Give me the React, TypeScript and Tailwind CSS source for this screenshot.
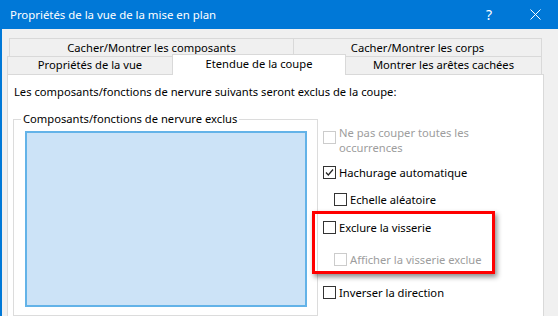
import { ReactNode } from 'react';

function Check({ checked, disabled }: { checked?: boolean; disabled?: boolean }) {
  return (
    <div
      className={`w-[13px] h-[13px] shrink-0 border bg-white flex items-center justify-center ${
        disabled ? 'border-[#cccccc]' : 'border-[#333333]'
      }`}
    >
      {checked && (
        <svg width="11" height="11" viewBox="0 0 11 11">
          <path d="M2 5.5 L4.3 8 L9 2.5" fill="none" stroke="#222" strokeWidth="1.2" />
        </svg>
      )}
    </div>
  );
}

function Row({
  children,
  checked,
  disabled,
  className = '',
}: {
  children: ReactNode;
  checked?: boolean;
  disabled?: boolean;
  className?: string;
}) {
  return (
    <div className={`flex items-center h-[15px] gap-[3px] ${className}`}>
      <Check checked={checked} disabled={disabled} />
      <span className={`leading-[15px] whitespace-nowrap ${disabled ? 'text-[#9d9d9d]' : 'text-black'}`}>
        {children}
      </span>
    </div>
  );
}

export default function App() {
  return (
    <div className="w-[558px] h-[316px] overflow-hidden bg-[#f0f0f0] font-['Noto_Sans',sans-serif] text-[11.2px] text-black">
      {/* Title bar */}
      <div className="h-[29px] bg-[#0078d7] flex items-center text-white">
        <span className="pl-[10px] flex-1 text-[11.4px]">Propriétés de la vue de la mise en plan</span>
        <div className="w-[46px] h-full flex items-center justify-center text-[14px]">?</div>
        <div className="w-[46px] h-full flex items-center justify-center">
          <svg width="11" height="11" viewBox="0 0 11 11">
            <path d="M0.5 0.5 L10.5 10.5 M10.5 0.5 L0.5 10.5" stroke="white" strokeWidth="1" />
          </svg>
        </div>
      </div>

      {/* Body */}
      <div className="h-[287px] border-l-2 border-[#0078d7] pl-[5px] pt-[9px]">
        {/* Tab row 1 */}
        <div className="flex ml-[2px] h-[18px]">
          <div className="w-[284px] border-t border-l border-[#d9d9d9] flex items-center justify-center leading-[17px]">
            Cacher/Montrer les composants
          </div>
          <div className="w-[249px] border-t border-l border-r border-[#d9d9d9] flex items-center justify-center leading-[17px]">
            Cacher/Montrer les corps
          </div>
        </div>

        {/* Tab row 2 */}
        <div className="flex items-end h-[18px]">
          <div className="w-[165px] h-[18px] border-t border-l border-[#d9d9d9] flex items-center justify-center">
            Propriétés de la vue
          </div>
          <div className="relative z-10 w-[174px] h-[21px] -mb-[1px] bg-white border-t border-l border-r border-[#d9d9d9] flex items-center justify-center pb-[2px]">
            Etendue de la coupe
          </div>
          <div className="w-[196px] h-[18px] border-t border-r border-[#d9d9d9] flex items-center justify-center">
            Montrer les arêtes cachées
          </div>
        </div>

        {/* Panel */}
        <div className="w-[537px] h-[260px] bg-white border border-[#d9d9d9] pl-[5px] pt-[9px]">
          <p className="ml-[1px] leading-[16px]">
            Les composants/fonctions de nervure suivants seront exclus de la coupe:
          </p>

          <div className="flex mt-[11px]">
            <fieldset className="w-[305px] h-[205px] border border-[#dcdcdc] px-0">
              <legend className="ml-[7px] px-[2px] leading-[16px]">Composants/fonctions de nervure exclus</legend>
              <div className="ml-[11px] mt-[4px] w-[282px] h-[176px] bg-[#cce3f7] border-2 border-[#63b3e8]" />
            </fieldset>

            <div className="ml-[5px] pt-[14px] flex flex-col">
              <div className="flex items-start gap-[3px]">
                <div className="mt-[6px]">
                  <Check disabled />
                </div>
                <span className="leading-[15px] text-[#9d9d9d]">
                  Ne pas couper toutes les
                  <br />
                  occurrences
                </span>
              </div>

              <Row checked className="mt-[10px]">
                Hachurage automatique
              </Row>
              <Row className="mt-[12px] ml-[11px]">Echelle aléatoire</Row>

              <div className="mt-[4px] -ml-[11px] w-[183px] border-[3px] border-[#ff0000] pl-[8px] pt-[6px] pb-[4px] shadow-[2px_3px_5px_rgba(0,0,0,0.45)]">
                <Row>Exclure la visserie</Row>
                <Row disabled className="mt-[17px] ml-[11px]">
                  Afficher la visserie exclue
                </Row>
              </div>

              <Row className="mt-[11px]">Inverser la direction</Row>
            </div>
          </div>
        </div>
      </div>
    </div>
  );
}
